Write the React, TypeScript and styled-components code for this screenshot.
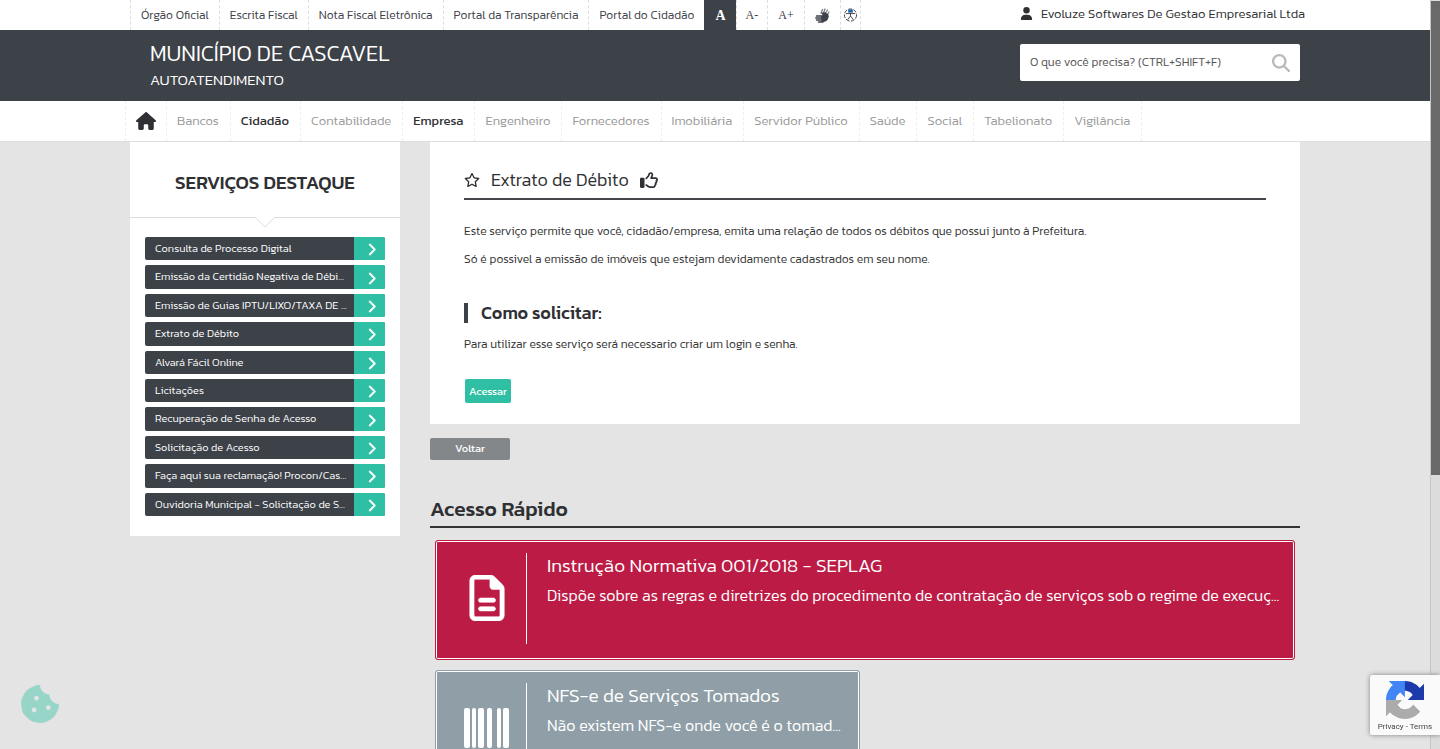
import React from "react";
import styled, { createGlobalStyle, css } from "styled-components";
import { FaCookieBite } from "react-icons/fa";
import {
  FaHouse,
  FaUser,
  FaMagnifyingGlass,
  FaRegStar,
  FaRegThumbsUp,
  FaChevronRight,
  FaRegFileLines,
} from "react-icons/fa6";

const color = {
  dark: "#3d4148",
  ink: "#2f3033",
  teal: "#2ebfa5",
  page: "#e4e4e4",
  crimson: "#bb1b44",
  slate: "#909fa7",
};

const GlobalStyle = createGlobalStyle`
  * { box-sizing: border-box; }
  html, body { margin: 0; padding: 0; }
  body {
    background: ${color.page};
    color: ${color.ink};
    font-family: Kanit, Roboto, "Liberation Sans", sans-serif;
    font-size: 12px;
    font-weight: 300;
  }
  h1, h2, h3, p, ul { margin: 0; padding: 0; }
  ul { list-style: none; }
  a { color: inherit; text-decoration: none; }
  button { font-family: inherit; font-weight: inherit; cursor: pointer; border: 0; padding: 0; }
  svg { flex-shrink: 0; }
`;

const Viewport = styled.div`
  height: 100vh;
  overflow: hidden;
  padding-right: 10px;
`;

const Container = styled.div`
  max-width: 1170px;
  margin: 0 auto;
  display: flex;
`;

const TopBar = styled.div`
  height: 30px;
  background: #fff;
`;

const TopLinks = styled.ul`
  display: flex;
  height: 30px;
  flex: 1;
`;

const TopItem = styled.li<{ $active?: boolean; $tool?: boolean; $pad?: number }>`
  border-left: 1px dashed #ddd;
  display: flex;
  &:last-child { border-right: 1px dashed #ddd; }
  a, button {
    display: flex;
    align-items: center;
    padding: 0 10px;
    font-size: 12px;
    color: ${color.dark};
    background: none;
    white-space: nowrap;
  }
  ${(p) =>
    p.$tool &&
    css`
      button {
        font-family: "Liberation Serif", serif;
        font-weight: 400;
        padding: 0 ${p.$pad ?? 9}px;
      }
    `}
  ${(p) =>
    p.$active &&
    css`
      background: ${color.dark};
      border-color: ${color.dark};
      button {
        color: #fff;
        font-size: 14px;
        font-weight: bold;
        padding: 2px 10px 0;
      }
    `}
`;

const UserLink = styled.a`
  display: flex;
  align-items: center;
  gap: 8px;
  width: 280px;
  height: 28px;
  padding-bottom: 1px;
  font-size: 13px;
  white-space: nowrap;
`;

const Banner = styled.header`
  background: ${color.dark};
  height: 71px;
  color: #fff;
`;

const Brand = styled.a`
  flex: 1;
  padding: 9px 20px 0;
`;

const BrandTitle = styled.div`
  font-size: 22px;
  line-height: 30px;
`;

const BrandSub = styled.div`
  font-size: 15px;
  line-height: 22px;
`;

const SearchBox = styled.form`
  display: flex;
  align-items: center;
  width: 280px;
  height: 37px;
  margin-top: 14px;
  padding: 0 10px;
  background: #fff;
  border-radius: 2px;
  input {
    flex: 1;
    min-width: 0;
    border: 0;
    outline: 0;
    padding: 0 0 2px;
    background: none;
    font: inherit;
  }
  input::placeholder { color: #555; opacity: 1; }
  button { background: none; color: #b9b9b9; display: flex; }
`;

const NavBar = styled.nav`
  background: #fff;
  height: 41px;
  border-bottom: 1px solid #ddd;
`;

const NavList = styled.ul`
  display: flex;
  height: 40px;
  margin-left: -5px;
`;

const NavItem = styled.li<{ $on?: boolean; $home?: boolean }>`
  border-left: 1px dashed #eee;
  &:last-child { border-right: 1px dashed #eee; }
  a {
    display: flex;
    align-items: center;
    height: 100%;
    padding: 0 ${(p) => (p.$home ? 10 : 11)}px ${(p) => (p.$home ? 0 : 2)}px 10px;
    font-size: 13px;
    font-weight: ${(p) => (p.$on ? 400 : 300)};
    color: ${(p) => (p.$on ? color.ink : "#999")};
    white-space: nowrap;
  }
`;

const Content = styled(Container)`
  gap: 30px;
  align-items: flex-start;
`;

const Sidebar = styled.aside`
  flex: 0 0 270px;
  background: #fff;
  padding-bottom: 20px;
`;

const SideTitle = styled.h2`
  position: relative;
  height: 76px;
  line-height: 82px;
  text-align: center;
  font-size: 19px;
  font-weight: 500;
  border-bottom: 1px solid #ddd;
  svg {
    position: absolute;
    top: 100%;
    left: 50%;
    margin-left: -11px;
  }
`;

const ServiceList = styled.ul`
  display: grid;
  grid-template-rows: repeat(10, 1fr);
  gap: 5px;
  height: 279px;
  margin: 19px 15px 0;
`;

const ServiceLink = styled.a`
  display: flex;
  height: 100%;
  border-radius: 2px;
  overflow: hidden;
  background: ${color.dark};
  color: #fff;
  font-size: 11px;
  span {
    flex: 1;
    padding-left: 10px;
    line-height: 22px;
    white-space: nowrap;
  }
  i {
    display: flex;
    align-items: center;
    justify-content: center;
    width: 31px;
    padding: 2px 0 0 4px;
    background: ${color.teal};
  }
  svg { stroke: #fff; stroke-width: 20px; }
`;

const Main = styled.main`
  flex: 1;
  min-width: 0;
`;

const Card = styled.section`
  background: #fff;
  padding: 20px 34px 21px;
`;

const CardTitle = styled.h1`
  display: flex;
  align-items: center;
  height: 38px;
  gap: 11px;
  padding-bottom: 1px;
  font-size: 18px;
  font-weight: 300;
  border-bottom: 2px solid #444548;
  margin-bottom: 17px;
`;

const Paragraph = styled.p`
  font-size: 12px;
  line-height: 28px;
  color: #333;
`;

const HowTo = styled.h2`
  border-left: 4px solid ${color.dark};
  padding-left: 13px;
  margin: 30px 0 7px;
  font-size: 18px;
  font-weight: 500;
  line-height: 20px;
`;

const ActionButton = styled.button`
  display: block;
  border-radius: 2px;
  color: #fff;
  font-size: 11px;
  font-weight: 400;
`;

const Access = styled(ActionButton)`
  height: 24px;
  margin: 21px 0 0 1px;
  padding: 0 4px;
  background: ${color.teal};
`;

const Back = styled(ActionButton)`
  width: 80px;
  height: 22px;
  margin-top: 14px;
  padding-bottom: 2px;
  background: #84878a;
`;

const QuickTitle = styled.h2`
  margin-top: 32px;
  height: 36px;
  line-height: 34px;
  font-size: 21px;
  font-weight: 500;
  border-bottom: 2px solid #333436;
`;

const Tiles = styled.div`
  display: grid;
  grid-template-columns: 1fr 1fr;
  gap: 10px;
  padding: 12px 5px;
`;

const Tile = styled.a<{ $bg: string; $wide?: boolean }>`
  grid-column: ${(p) => (p.$wide ? "span 2" : "span 1")};
  display: flex;
  height: 120px;
  padding: 12px 10px 15px 0;
  border: 1px solid ${(p) => p.$bg};
  border-radius: 3px;
  box-shadow: inset 0 0 0 1px #fff;
  background: ${(p) => p.$bg};
  color: #fff;
  overflow: hidden;
`;

const TileIcon = styled.div`
  flex: 0 0 91px;
  display: flex;
  align-items: center;
  justify-content: center;
  padding: 0 0 2px 11px;
  border-right: 1px solid #fff;
`;

const FileIcon = styled(FaRegFileLines)`
  stroke: #fff;
  stroke-width: 6px;
`;

const TileText = styled.div`
  padding-left: 20px;
  white-space: nowrap;
  h3 { font-size: 19px; font-weight: 300; line-height: 26px; }
  p { font-size: 16px; line-height: 32px; }
`;

const ScrollTrack = styled.div`
  position: fixed;
  top: 0;
  right: 0;
  bottom: 0;
  width: 10px;
  background: #dcdcdc;
  border-left: 1px solid #c6c6c6;
`;

const ScrollThumb = styled.div`
  margin-top: 1px;
  height: 474px;
  background: #696969;
`;

const CookieButton = styled.button`
  position: fixed;
  left: 21px;
  bottom: 26px;
  display: flex;
  background: none;
  color: #97d5c9;
`;

const Captcha = styled.div`
  position: fixed;
  right: 0;
  bottom: 14px;
  width: 70px;
  height: 60px;
  padding-top: 6px;
  display: flex;
  flex-direction: column;
  align-items: center;
  background: #fafafa;
  border-radius: 2px 0 0 2px;
  box-shadow: 0 0 5px #808080;
  font-family: Roboto, "Liberation Sans", sans-serif;
  font-size: 8px;
  font-weight: 400;
  line-height: 16px;
  color: #444;
`;

const SignIcon = () => (
  <svg width="15" height="15" viewBox="0 0 15 15" fill="none" strokeLinecap="round">
    <path d="M6 5L7.500 1.500M8.500 5L10 1M10.500 5L12.500 2M12 7L14 4" stroke="#777b80" strokeWidth="1.300" />
    <path d="M8 7L6 5.500Q8 3.500 10.500 4.500L13.500 6.500Q14.500 9.500 12.500 12Q10.500 14.500 6.500 14L6 8Z" fill={color.dark} />
    <path d="M1.500 8H8M.8 10H8M1.500 12H8M3.500 14H8" stroke={color.dark} strokeWidth="1.500" />
  </svg>
);

const AccessIcon = () => (
  <svg width="15" height="16" viewBox="0 0 16 16" fill="none" stroke={color.dark}>
    <circle cx="8" cy="8" r="6.5" strokeDasharray="4 1.5" />
    <path d="M3 6.5h10M8 6v3M8 9l-3 4M8 9l3 4" strokeWidth="1" />
    <rect x="5.5" y="2" width="5" height="3.500" fill="#2b67a5" stroke="none" />
  </svg>
);

const Barcode = () => (
  <svg width="46" height="40" viewBox="0 0 46 40" fill="#fff">
    <rect x="0" width="6" height="40" rx="2" />
    <rect x="8" width="4" height="40" rx="2" />
    <rect x="14" width="6" height="40" rx="2" />
    <rect x="23" width="5" height="40" rx="2" />
    <rect x="33" width="4" height="40" rx="2" />
    <rect x="39" width="6" height="40" rx="2" />
  </svg>
);

const CaptchaLogo = () => (
  <svg width="38" height="38" viewBox="0 0 64 64">
    <path d="M64 31.955l-.033-1.37V4.687l-7.16 7.16C50.948 4.674 42.033.093 32.05.093c-10.4 0-19.622 4.96-25.458 12.64l11.736 11.86a15.55 15.55 0 0 1 4.754-5.334c2.05-1.6 4.952-2.906 8.968-2.906.485 0 .86.057 1.135.163 4.976.393 9.288 3.14 11.828 7.124l-8.307 8.307L64 31.953" fill="#1c3aa9" />
    <path d="M31.862.094l-1.37.033H4.594l7.16 7.16C4.58 13.147 0 22.06 0 32.046c0 10.4 4.96 19.622 12.64 25.458L24.5 45.768a15.55 15.55 0 0 1-5.334-4.754c-1.6-2.05-2.906-4.952-2.906-8.968 0-.485.057-.86.163-1.135.393-4.976 3.14-9.288 7.124-11.828l8.307 8.307L31.86.095" fill="#4285f4" />
    <path d="M.001 32.045l.033 1.37v25.898l7.16-7.16c5.86 7.173 14.774 11.754 24.76 11.754 10.4 0 19.622-4.96 25.458-12.64l-11.736-11.86a15.55 15.55 0 0 1-4.754 5.334c-2.05 1.6-4.952 2.906-8.968 2.906-.485 0-.86-.057-1.135-.163-4.976-.393-9.288-3.14-11.828-7.124l8.307-8.307c-10.522.04-22.4.066-27.295-.005" fill="#ababab" />
  </svg>
);

const topLinks = [
  "Órgão Oficial",
  "Escrita Fiscal",
  "Nota Fiscal Eletrônica",
  "Portal da Transparência",
  "Portal do Cidadão",
];

const navLinks = [
  "Bancos",
  "Cidadão",
  "Contabilidade",
  "Empresa",
  "Engenheiro",
  "Fornecedores",
  "Imobiliária",
  "Servidor Público",
  "Saúde",
  "Social",
  "Tabelionato",
  "Vigilância",
];

const services = [
  "Consulta de Processo Digital",
  "Emissão da Certidão Negativa de Débi...",
  "Emissão de Guias IPTU/LIXO/TAXA DE ...",
  "Extrato de Débito",
  "Alvará Fácil Online",
  "Licitações",
  "Recuperação de Senha de Acesso",
  "Solicitação de Acesso",
  "Faça aqui sua reclamação! Procon/Cas...",
  "Ouvidoria Municipal - Solicitação de S...",
];

export default function App() {
  return (
    <Viewport>
      <GlobalStyle />
      <TopBar>
        <Container>
          <TopLinks>
            {topLinks.map((t) => (
              <TopItem key={t}><a href="#">{t}</a></TopItem>
            ))}
            <TopItem $tool $active><button>A</button></TopItem>
            <TopItem $tool><button>A-</button></TopItem>
            <TopItem $tool $pad={10}><button>A+</button></TopItem>
            <TopItem $tool $pad={10}><button aria-label="Libras"><SignIcon /></button></TopItem>
            <TopItem $tool $pad={2}><button aria-label="Acessibilidade"><AccessIcon /></button></TopItem>
          </TopLinks>
          <UserLink href="#"><FaUser size={13} />Evoluze Softwares De Gestao Empresarial Ltda</UserLink>
        </Container>
      </TopBar>
      <Banner>
        <Container>
          <Brand href="#">
            <BrandTitle>MUNICÍPIO DE CASCAVEL</BrandTitle>
            <BrandSub>AUTOATENDIMENTO</BrandSub>
          </Brand>
          <SearchBox>
            <input type="text" aria-label="Pesquisar" placeholder="O que você precisa? (CTRL+SHIFT+F)" />
            <button type="button" aria-label="Buscar"><FaMagnifyingGlass size={18} /></button>
          </SearchBox>
        </Container>
      </Banner>
      <NavBar>
        <Container>
          <NavList>
            <NavItem $on $home><a href="#" aria-label="Início"><FaHouse size={20} /></a></NavItem>
            {navLinks.map((t) => (
              <NavItem key={t} $on={t === "Cidadão" || t === "Empresa"}><a href="#">{t}</a></NavItem>
            ))}
          </NavList>
        </Container>
      </NavBar>
      <Content>
        <Sidebar>
          <SideTitle>
            SERVIÇOS DESTAQUE
            <svg width="22" height="11" viewBox="0 0 22 11">
              <path d="M0 -1L11 10L22 -1" fill="#fff" stroke="#ddd" />
            </svg>
          </SideTitle>
          <ServiceList>
            {services.map((s) => (
              <li key={s}>
                <ServiceLink href="#"><span>{s}</span><i><FaChevronRight size={13} /></i></ServiceLink>
              </li>
            ))}
          </ServiceList>
        </Sidebar>
        <Main>
          <Card>
            <CardTitle><FaRegStar size={16} />Extrato de Débito<FaRegThumbsUp size={18} /></CardTitle>
            <Paragraph>Este serviço permite que você, cidadão/empresa, emita uma relação de todos os débitos que possui junto à Prefeitura.</Paragraph>
            <Paragraph>Só é possivel a emissão de imóveis que estejam devidamente cadastrados em seu nome.</Paragraph>
            <HowTo>Como solicitar:</HowTo>
            <Paragraph>Para utilizar esse serviço será necessario criar um login e senha.</Paragraph>
            <Access>Acessar</Access>
          </Card>
          <Back>Voltar</Back>
          <QuickTitle>Acesso Rápido</QuickTitle>
          <Tiles>
            <Tile href="#" $bg={color.crimson} $wide>
              <TileIcon><FileIcon size={46} /></TileIcon>
              <TileText>
                <h3>Instrução Normativa 001/2018 - SEPLAG</h3>
                <p>Dispõe sobre as regras e diretrizes do procedimento de contratação de serviços sob o regime de execuç...</p>
              </TileText>
            </Tile>
            <Tile href="#" $bg={color.slate}>
              <TileIcon><Barcode /></TileIcon>
              <TileText>
                <h3>NFS-e de Serviços Tomados</h3>
                <p>Não existem NFS-e onde você é o tomad...</p>
              </TileText>
            </Tile>
          </Tiles>
        </Main>
      </Content>
      <ScrollTrack><ScrollThumb /></ScrollTrack>
      <CookieButton aria-label="Cookies"><FaCookieBite size={38} /></CookieButton>
      <Captcha>
        <CaptchaLogo />
        <div><a href="#">Privacy</a> - <a href="#">Terms</a></div>
      </Captcha>
    </Viewport>
  );
}
